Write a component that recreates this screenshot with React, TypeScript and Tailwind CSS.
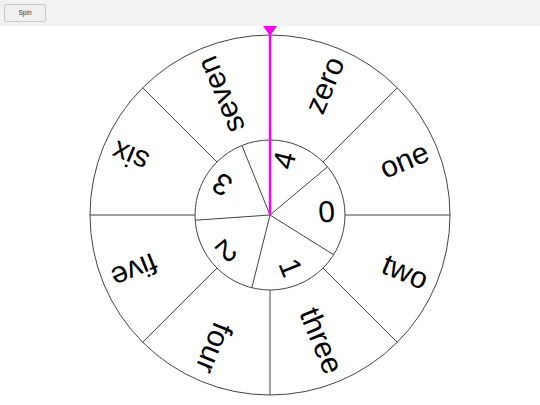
import React from "react";

const outer = ["zero", "one", "two", "three", "four", "five", "six", "seven"];
const inner = ["0", "1", "2", "3", "4"];

const CX = 270;
const CY = 189;
const R = 180;
const r = 75;

function rad(deg: number) {
  return (deg * Math.PI) / 180;
}

function Wheel() {
  const outerStep = 360 / outer.length;
  const innerStep = 360 / inner.length;
  const innerStart = -40;

  return (
    <svg width={540} height={379} className="block" style={{ fontFamily: '"Liberation Sans", Arial, sans-serif' }}>
      <circle cx={CX} cy={CY} r={R} fill="white" stroke="#444" strokeWidth={1} />
      {outer.map((_, i) => {
        const a = rad(-90 + outerStep * i);
        return (
          <line
            key={`ol${i}`}
            x1={CX}
            y1={CY}
            x2={CX + R * Math.cos(a)}
            y2={CY + R * Math.sin(a)}
            stroke="#444"
            strokeWidth={1}
          />
        );
      })}
      {outer.map((label, i) => {
        const a = -90 + outerStep * i + outerStep / 2;
        return (
          <text
            key={`ot${i}`}
            transform={`translate(${CX} ${CY}) rotate(${a})`}
            x={R - 10}
            y={0}
            dy="0.36em"
            textAnchor="end"
            fontSize={30}
            fill="#000"
          >
            {label}
          </text>
        );
      })}
      <circle cx={CX} cy={CY} r={r} fill="white" stroke="#444" strokeWidth={1} />
      {inner.map((_, i) => {
        const a = rad(innerStart + innerStep * i);
        return (
          <line
            key={`il${i}`}
            x1={CX}
            y1={CY}
            x2={CX + r * Math.cos(a)}
            y2={CY + r * Math.sin(a)}
            stroke="#444"
            strokeWidth={1}
          />
        );
      })}
      {inner.map((label, i) => {
        const a = innerStart + innerStep * i + innerStep / 2;
        return (
          <text
            key={`it${i}`}
            transform={`translate(${CX} ${CY}) rotate(${a})`}
            x={r - 10}
            y={0}
            dy="0.36em"
            textAnchor="end"
            fontSize={30}
            fill="#000"
          >
            {label}
          </text>
        );
      })}
      <line x1={CX} y1={9} x2={CX} y2={CY} stroke="#ff00ff" strokeWidth={2.5} />
      <polygon points={`${CX - 7},0 ${CX + 7},0 ${CX},10`} fill="#ff00ff" />
    </svg>
  );
}

export default function App() {
  return (
    <div className="w-[540px] h-[405px] bg-white overflow-hidden">
      <div className="h-[26px] bg-[#f2f2f2] px-1 pt-1">
        <button className="w-[42px] h-[18px] bg-[#f0f0f0] border border-[#c8c8c8] rounded-[2px] text-[6.5px] text-[#333] font-['Liberation_Sans',Arial,sans-serif] flex items-center justify-center">
          Spin
        </button>
      </div>
      <Wheel />
    </div>
  );
}
